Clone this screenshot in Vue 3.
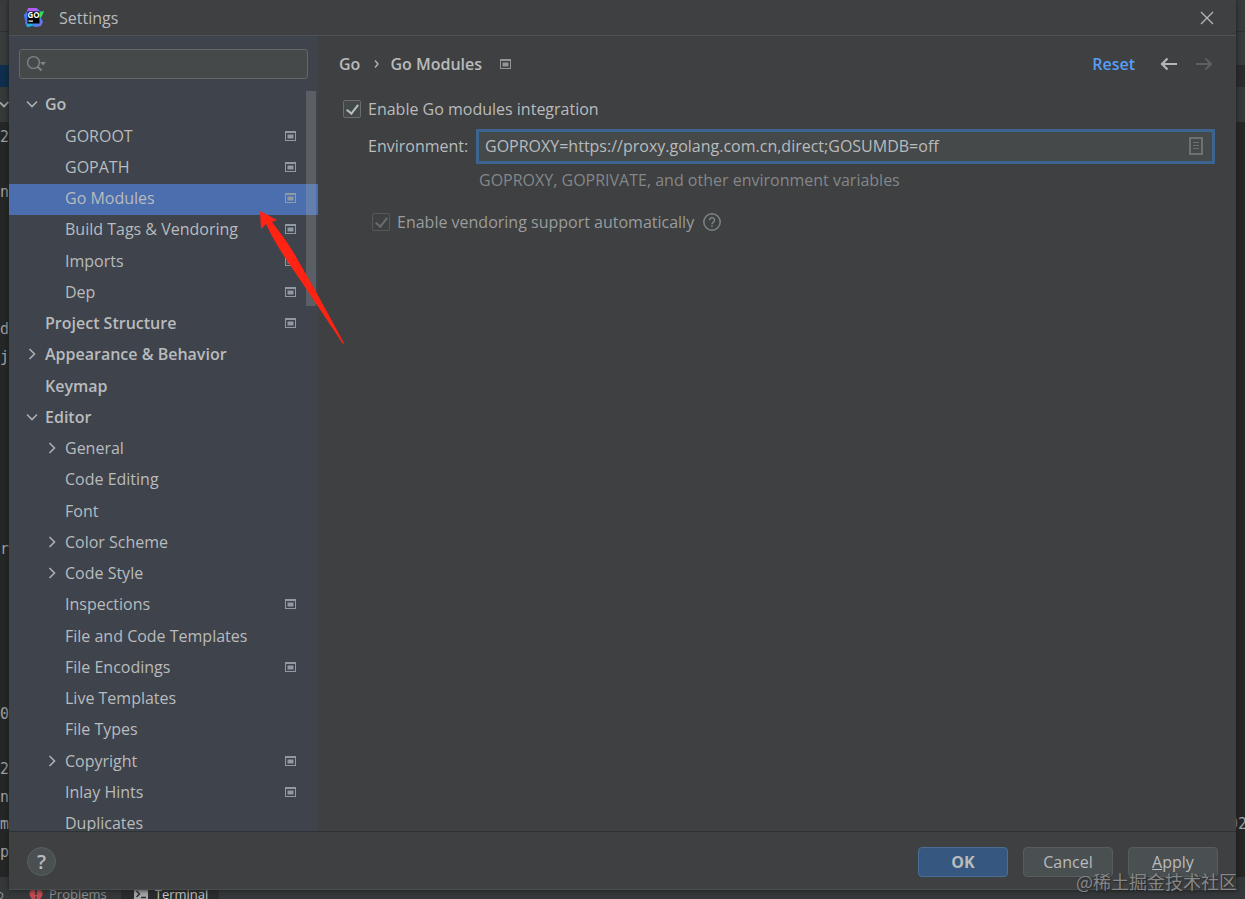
<script setup>
import { ref } from 'vue'

const rows = [
  { text: 'Go', level: 0, bold: true, arrow: 'down' },
  { text: 'GOROOT', level: 1, mark: true },
  { text: 'GOPATH', level: 1, mark: true },
  { text: 'Go Modules', level: 1, mark: true, selected: true },
  { text: 'Build Tags & Vendoring', level: 1, mark: true },
  { text: 'Imports', level: 1, mark: true },
  { text: 'Dep', level: 1, mark: true },
  { text: 'Project Structure', level: 0, bold: true, mark: true },
  { text: 'Appearance & Behavior', level: 0, bold: true, arrow: 'right' },
  { text: 'Keymap', level: 0, bold: true },
  { text: 'Editor', level: 0, bold: true, arrow: 'down' },
  { text: 'General', level: 1, arrow: 'right' },
  { text: 'Code Editing', level: 1 },
  { text: 'Font', level: 1 },
  { text: 'Color Scheme', level: 1, arrow: 'right' },
  { text: 'Code Style', level: 1, arrow: 'right' },
  { text: 'Inspections', level: 1, mark: true },
  { text: 'File and Code Templates', level: 1 },
  { text: 'File Encodings', level: 1, mark: true },
  { text: 'Live Templates', level: 1 },
  { text: 'File Types', level: 1 },
  { text: 'Copyright', level: 1, arrow: 'right', mark: true },
  { text: 'Inlay Hints', level: 1, mark: true },
  { text: 'Duplicates', level: 1 },
]

const query = ref('')
const enabled = ref(true)
const vendoring = ref(true)
const environment = ref('GOPROXY=https://proxy.golang.com.cn,direct;GOSUMDB=off')

const codeBits = [
  { text: '2', y: 126 },
  { text: 'n', y: 181 },
  { text: 'd', y: 318 },
  { text: 'j', y: 346 },
  { text: 'r', y: 538 },
  { text: '0', y: 703 },
  { text: '2', y: 758 },
  { text: 'n', y: 786 },
  { text: 'm', y: 813 },
  { text: 'p', y: 841 },
]
</script>

<template>
  <div class="desktop">
    <div class="ide">
      <div class="ide-top"></div>
      <div class="ide-nav"></div>
      <div class="ide-tabs"><i class="ide-active"></i></div>
      <div class="ide-head">
        <svg width="9" height="10" viewBox="0 0 9 10"><path d="M0 2.500L4 6.500L8.500 2" fill="none" stroke="#a6a8aa" stroke-width="1.800" /></svg>
      </div>
      <div class="ide-code"></div>
      <div class="ide-bar">
        <span class="ide-cut">o</span>
        <svg class="problem" width="14" height="14" viewBox="0 0 14 14"><circle cx="7" cy="7" r="6.500" fill="#c24a50" /><path d="M7 3v5M7 9.500v2" stroke="#3c3f41" stroke-width="2" /></svg>
        <span class="ide-problems">Problems</span>
        <span class="ide-terminal">
          <svg width="14" height="13" viewBox="0 0 14 13"><path d="M0 0h14v13H0z" fill="#a3a6a8" /><path d="M2.500 3l3 3-3 3M7 9.500h5" fill="none" stroke="#2c2e30" stroke-width="1.500" /></svg>
          Terminal
        </span>
      </div>
    </div>
    <span v-for="bit in codeBits" :key="bit.y" class="bit" :style="{ top: bit.y + 'px' }">{{ bit.text }}</span>
    <span class="bit-right">02</span>

    <main class="dialog">
      <header class="titlebar">
        <svg class="logo" width="22" height="22" viewBox="0 0 22 22">
          <defs>
            <linearGradient id="logo-fill" x1="0" y1="0" x2="1" y2="1">
              <stop offset="0" stop-color="#a95cf0" />
              <stop offset=".35" stop-color="#6f62f2" />
              <stop offset=".6" stop-color="#1e9ae8" />
              <stop offset="1" stop-color="#9b5cf0" />
            </linearGradient>
          </defs>
          <path d="M6 1h8l3 3 2 3-1 4 2 4-2 4-5 1-4-1-5 1-2-4 1-4-2-4 3-4z" fill="url(#logo-fill)" />
          <path d="M5 1h8l2 3H4z" fill="#b35cf0" />
          <path d="M1 8l3-3v7l-2 2z" fill="#3f78f0" />
          <path d="M16 5l5-1-2 5-3 3z" fill="#30e05a" />
          <path d="M4 16l4 0 1 3-5 1z" fill="#19b6d8" />
          <path d="M4.500 4.500h12v12h-12z" fill="#000" />
          <text x="4.500" y="11" class="logo-text">GO</text>
          <path d="M5.500 13.500h4.500v1.200H5.500z" fill="#fff" />
        </svg>
        <h1>Settings</h1>
        <button class="icon-button close" aria-label="Close">
          <svg width="14" height="14" viewBox="0 0 14 14"><path d="M1 1l12 12M13 1L1 13" stroke="#b5b7b9" stroke-width="1.300" /></svg>
        </button>
      </header>

      <div class="body">
        <aside class="sidebar">
          <label class="search">
            <svg width="22" height="18" viewBox="0 0 22 18">
              <circle cx="7.500" cy="7.500" r="5.900" fill="none" stroke="#7f8385" stroke-width="1.400" />
              <path d="M11.500 11.500l4 4" stroke="#7f8385" stroke-width="2" />
              <path d="M14 7h6l-3 3.500z" fill="#7f8385" />
            </svg>
            <input v-model="query" type="text" aria-label="Search settings" />
          </label>
          <nav class="tree">
            <button
              v-for="row in rows"
              :key="row.text"
              class="row"
              :class="{ bold: row.bold, child: row.level === 1, selected: row.selected }"
            >
              <span class="chevron">
                <svg v-if="row.arrow === 'down'" width="12" height="12" viewBox="0 0 12 12"><path d="M1 3.500l5 5 5-5" fill="none" stroke="#adafb2" stroke-width="1.600" /></svg>
                <svg v-if="row.arrow === 'right'" width="12" height="12" viewBox="0 0 12 12"><path d="M3.500 1l5 5-5 5" fill="none" stroke="#adafb2" stroke-width="1.600" /></svg>
              </span>
              <span class="name">{{ row.text }}</span>
              <svg v-if="row.mark" class="mark" width="11" height="10" viewBox="0 0 11 10"><path d="M0 0h11v10H0zM1 2v7h9V2z" fill="#9199a1" fill-rule="evenodd" /><path d="M2.500 3.500h6v4h-6z" fill="#9199a1" /></svg>
            </button>
          </nav>
          <div class="thumb"></div>
        </aside>

        <section class="content">
          <div class="crumbs">
            <span>Go</span>
            <svg class="sep" width="5" height="8" viewBox="0 0 5 8"><path d="M1 .5L4 4 1 7.500" fill="none" stroke="#b5b7b9" stroke-width="1.300" /></svg>
            <h2>Go Modules</h2>
            <svg class="crumb-mark" width="11" height="10" viewBox="0 0 11 10"><path d="M0 0h11v10H0zM1 2v7h9V2z" fill="#929496" fill-rule="evenodd" /><path d="M2.500 3.500h6v4h-6z" fill="#929496" /></svg>
            <a class="reset" href="#">Reset</a>
            <button class="icon-button" aria-label="Back">
              <svg width="18" height="14" viewBox="0 0 18 14"><path d="M17 7H2M7.500 1.500L2 7l5.500 5.500" fill="none" stroke="#b5b7b9" stroke-width="2.200" /></svg>
            </button>
            <button class="icon-button forward" aria-label="Forward" disabled>
              <svg width="18" height="14" viewBox="0 0 18 14"><path d="M1 7h15M10.500 1.500L16 7l-5.500 5.500" fill="none" stroke="#5c5f61" stroke-width="2.200" /></svg>
            </button>
          </div>

          <div class="line first">
            <input id="enable" v-model="enabled" class="tick" type="checkbox" />
            <label for="enable">Enable Go modules integration</label>
          </div>
          <div class="line env">
            <label for="environment">Environment:</label>
            <div class="field">
              <input id="environment" v-model="environment" type="text" />
              <button class="icon-button" aria-label="Edit variables">
                <svg width="14" height="18" viewBox="0 0 14 18"><path d="M1 1h12v16H1z" fill="none" stroke="#6c7072" stroke-width="2" /><path d="M4 5.500h6M4 8.500h6M4 11.500h6" stroke="#6c7072" stroke-width="1" /></svg>
              </button>
            </div>
          </div>
          <p class="hint">GOPROXY, GOPRIVATE, and other environment variables</p>
          <div class="line vendor">
            <input id="vendoring" v-model="vendoring" class="tick" type="checkbox" disabled />
            <label for="vendoring">Enable vendoring support automatically</label>
            <button class="icon-button help-small" aria-label="About vendoring">
              <svg width="18" height="18" viewBox="0 0 18 18"><circle cx="9" cy="9" r="8.200" fill="none" stroke="#7d8486" stroke-width="1.500" /><path d="M6.500 7.200a2.500 2.500 0 1 1 3.900 2Q9 10 9 11.200M9 12.500v1.500" fill="none" stroke="#7d8486" stroke-width="1.500" /></svg>
            </button>
          </div>
        </section>
      </div>

      <footer class="actions">
        <button class="help" aria-label="Help">?</button>
        <button class="action primary">OK</button>
        <button class="action">Cancel</button>
        <button class="action"><u>A</u>pply</button>
      </footer>
    </main>

    <svg class="pointer" width="86" height="136" viewBox="0 0 86 136"><path d="M0 1L17 10 12 12C22 25 30 36 35 45L55 80 84 133 83 134 47 80 26 49C18 37 11 25 6 14L1 19Z" fill="#ff2314" /></svg>
    <span class="watermark">@稀土掘金技术社区</span>
  </div>
</template>

<style>
body {
  margin: 0;
  background: #262626;
}
</style>

<style scoped>
* {
  box-sizing: border-box;
}
.desktop {
  position: relative;
  height: 100vh;
  overflow: hidden;
  font-family: "Open Sans", "Noto Sans CJK SC", sans-serif;
  font-size: 16px;
  line-height: 20px;
  color: #b9bbbd;
}
button,
input {
  font: inherit;
  color: inherit;
  margin: 0;
  padding: 0;
  border: 0;
  background: none;
}
svg {
  display: block;
  flex: none;
}
h1,
h2 {
  margin: 0;
  font-size: inherit;
  font-weight: inherit;
}
.icon-button {
  display: flex;
}

.ide {
  display: flex;
  flex-direction: column;
  height: 100%;
  background: #252626;
}
.ide-top {
  height: 32px;
  background: #393c3d;
  border-bottom: 1px solid #2d2f30;
}
.ide-nav {
  height: 33px;
  background: #393c3d;
}
.ide-tabs {
  display: flex;
  height: 22px;
  background: #292b2c;
}
.ide-active {
  width: 50%;
  background: #0d2f4d;
}
.ide-head {
  display: flex;
  align-items: center;
  height: 35px;
  background: #35393a;
}
.ide-code {
  flex: 1;
}
.ide-bar {
  display: flex;
  align-items: center;
  height: 22px;
  padding-top: 12px;
  background: #35383a;
  font-size: 13px;
  color: #8e9193;
}
.ide-cut {
  width: 29px;
  margin-left: -4px;
}
.problem {
  margin-left: 4px;
}
.ide-problems {
  margin: 0 14px 0 6px;
}
.ide-terminal {
  display: flex;
  align-items: center;
  gap: 7px;
  padding: 0 11px 0 13px;
  background: #292b2d;
  color: #c4c6c8;
}
.bit,
.bit-right {
  position: absolute;
  left: 0;
  width: 9px;
  direction: rtl;
  overflow: hidden;
  font-family: "DejaVu Sans Mono", monospace;
  font-size: 15px;
  line-height: 22px;
  color: #9da3a8;
}
.bit-right {
  top: 813px;
  left: auto;
  right: -2px;
  width: 18px;
}

.dialog {
  position: absolute;
  inset: 0 9px 9px 9px;
  display: flex;
  flex-direction: column;
  background: #3e4041;
  border-bottom: 1px solid #4a4d4f;
  box-shadow: 0 0 5px #1b1c1d;
}
.titlebar {
  display: flex;
  align-items: center;
  height: 36px;
  padding: 0 22px 0 14px;
  border-bottom: 1px solid #505355;
}
.titlebar h1 {
  margin-left: 14px;
}
.logo-text {
  font-size: 8px;
  font-weight: 700;
  fill: #fff;
}
.close {
  margin-left: auto;
}
.body {
  display: flex;
  flex: 1;
  min-height: 0;
}
.sidebar {
  position: relative;
  display: flex;
  flex-direction: column;
  width: 309px;
  padding-top: 13px;
  background: #3e434c;
  overflow: hidden;
}
.search {
  display: flex;
  align-items: center;
  flex: none;
  height: 30px;
  margin: 0 10px 11px;
  padding-left: 6px;
  border: 1px solid #62676a;
  border-radius: 3px;
  background: #45494a;
}
.search input {
  flex: 1;
  min-width: 0;
  outline: 0;
}
.tree {
  flex: 1;
  min-height: 0;
  overflow: hidden;
}
.row {
  display: flex;
  align-items: center;
  width: 100%;
  height: 31px;
  padding: 0 22px 3px 17px;
  text-align: left;
}
.row:nth-child(4n + 2) {
  height: 32px;
}
.row.child {
  padding-left: 37px;
}
.row.bold {
  font-weight: 600;
}
.row.selected {
  background: #4b6eaf;
}
.chevron {
  width: 19px;
  flex: none;
}
.name {
  flex: 1;
  white-space: nowrap;
}
.thumb {
  position: absolute;
  top: 55px;
  right: 2px;
  width: 10px;
  height: 215px;
  background: rgba(166, 168, 171, 0.28);
}
.content {
  flex: 1;
  min-width: 0;
  padding: 18px 21px 0;
}
.crumbs {
  display: flex;
  align-items: center;
  height: 20px;
  padding-right: 2px;
  font-weight: 600;
}
.sep {
  margin: 0 11px 0 14px;
}
.crumb-mark {
  margin-left: 18px;
}
.reset {
  margin: 0 25px 0 auto;
  color: #589df6;
  text-decoration: none;
}
.forward {
  margin-left: 17px;
}
.line {
  display: flex;
  align-items: center;
}
.first {
  height: 24px;
  margin: 23px 0 0 4px;
}
.tick {
  appearance: none;
  position: relative;
  flex: none;
  width: 18px;
  height: 18px;
  margin-right: 7px;
  border: 1px solid #6b6e70;
  border-radius: 2px;
  background: #43484a;
}
.tick:checked::after {
  content: "";
  position: absolute;
  top: 1px;
  left: 5px;
  width: 5px;
  height: 10px;
  border: solid #bbbdbf;
  border-width: 0 2px 2px 0;
  transform: rotate(38deg);
}
.tick:disabled {
  border-color: #56595b;
  background: #3e4041;
}
.tick:disabled::after {
  border-color: #6a6d6f;
}
.env {
  margin: 8px 0 0 29px;
}
.env label {
  width: 108px;
  flex: none;
  padding-bottom: 2px;
}
.field {
  display: flex;
  align-items: center;
  flex: 1;
  height: 35px;
  padding: 0 9px 2px 6px;
  border: 3px solid #3b6590;
  background: #45494a;
}
.field input {
  flex: 1;
  min-width: 0;
  outline: 0;
}
.hint {
  margin: 6px 0 0 140px;
  color: #84878a;
}
.vendor {
  height: 24px;
  margin: 20px 0 0 33px;
  color: #9a9c9e;
}
.help-small {
  margin-left: 9px;
}
.actions {
  display: flex;
  align-items: center;
  gap: 15px;
  height: 58px;
  padding: 2px 18px 0;
  border-top: 1px solid #2f3234;
}
.help {
  width: 29px;
  height: 29px;
  margin-right: auto;
  border: 1px solid #5a5f61;
  border-radius: 50%;
  background: #4a4f51;
  font-size: 20px;
  font-weight: 600;
}
.action {
  width: 90px;
  height: 30px;
  border: 1px solid #575c5e;
  border-radius: 4px;
  background: #4a4f51;
}
.primary {
  border-color: #4a6f96;
  background: #365880;
  font-weight: 700;
}
.pointer {
  position: absolute;
  top: 210px;
  left: 260px;
}
.watermark {
  position: absolute;
  right: 8px;
  bottom: 6px;
  font-family: "Noto Sans CJK SC", sans-serif;
  font-size: 18px;
  line-height: 24px;
  color: #85878a;
  text-shadow: 1px 1px 2px #222;
}
</style>
